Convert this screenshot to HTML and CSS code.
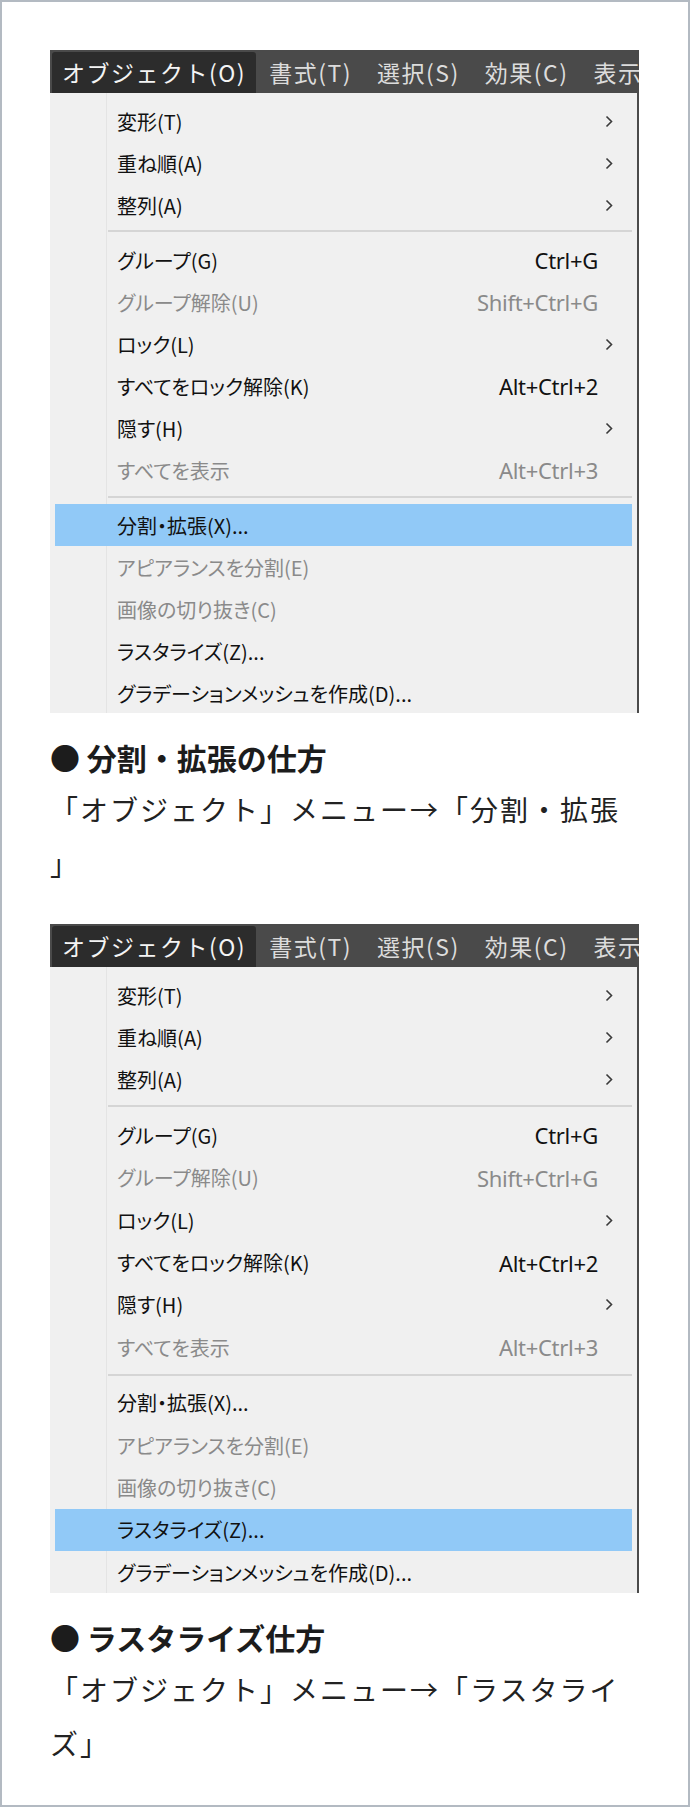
FILE: index.html
```html
<!DOCTYPE html>
<html lang="ja">
  <head>
    <meta charset="UTF-8">
    <title>分割・拡張とラスタライズ</title>
    <link rel="stylesheet" href="styles.css">
  </head>
  <body>
    <div class="page">

      <div class="shot">
        <div class="menubar">
          <span class="mb-item mb-open">オブジェクト(O)</span>
          <span class="mb-item">書式(T)</span>
          <span class="mb-item">選択(S)</span>
          <span class="mb-item">効果(C)</span>
          <span class="mb-item">表示(V)</span>
        </div>
        <div class="menu">
          <div class="row"><span class="label">変形(T)</span><span class="key"></span><span class="sub"><svg width="8" height="13" viewBox="0 0 8 13"><polyline points="1.5,1.5 6.5,6.5 1.5,11.5"/></svg></span></div>
          <div class="row"><span class="label">重ね順(A)</span><span class="key"></span><span class="sub"><svg width="8" height="13" viewBox="0 0 8 13"><polyline points="1.5,1.5 6.5,6.5 1.5,11.5"/></svg></span></div>
          <div class="row"><span class="label">整列(A)</span><span class="key"></span><span class="sub"><svg width="8" height="13" viewBox="0 0 8 13"><polyline points="1.5,1.5 6.5,6.5 1.5,11.5"/></svg></span></div>
          <div class="sep"></div>
          <div class="row"><span class="label">グループ(G)</span><span class="key">Ctrl+G</span><span class="sub"></span></div>
          <div class="row off"><span class="label">グループ解除(U)</span><span class="key">Shift+Ctrl+G</span><span class="sub"></span></div>
          <div class="row"><span class="label">ロック(L)</span><span class="key"></span><span class="sub"><svg width="8" height="13" viewBox="0 0 8 13"><polyline points="1.5,1.5 6.5,6.5 1.5,11.5"/></svg></span></div>
          <div class="row"><span class="label">すべてをロック解除(K)</span><span class="key">Alt+Ctrl+2</span><span class="sub"></span></div>
          <div class="row"><span class="label">隠す(H)</span><span class="key"></span><span class="sub"><svg width="8" height="13" viewBox="0 0 8 13"><polyline points="1.5,1.5 6.5,6.5 1.5,11.5"/></svg></span></div>
          <div class="row off"><span class="label">すべてを表示</span><span class="key">Alt+Ctrl+3</span><span class="sub"></span></div>
          <div class="sep sep-low"></div>
          <div class="row active"><span class="label">分割・拡張(X)...</span><span class="key"></span><span class="sub"></span></div>
          <div class="row off"><span class="label">アピアランスを分割(E)</span><span class="key"></span><span class="sub"></span></div>
          <div class="row off"><span class="label">画像の切り抜き(C)</span><span class="key"></span><span class="sub"></span></div>
          <div class="row"><span class="label">ラスタライズ(Z)...</span><span class="key"></span><span class="sub"></span></div>
          <div class="row"><span class="label">グラデーションメッシュを作成(D)...</span><span class="key"></span><span class="sub"></span></div>
        </div>
      </div>

      <h3 class="cap-title">● 分割・拡張の仕方</h3>
      <p class="cap-text">「オブジェクト」メニュー→「分割・拡張」</p>

      <div class="shot shot-second">
        <div class="menubar">
          <span class="mb-item mb-open">オブジェクト(O)</span>
          <span class="mb-item">書式(T)</span>
          <span class="mb-item">選択(S)</span>
          <span class="mb-item">効果(C)</span>
          <span class="mb-item">表示(V)</span>
        </div>
        <div class="menu">
          <div class="row"><span class="label">変形(T)</span><span class="key"></span><span class="sub"><svg width="8" height="13" viewBox="0 0 8 13"><polyline points="1.5,1.5 6.5,6.5 1.5,11.5"/></svg></span></div>
          <div class="row"><span class="label">重ね順(A)</span><span class="key"></span><span class="sub"><svg width="8" height="13" viewBox="0 0 8 13"><polyline points="1.5,1.5 6.5,6.5 1.5,11.5"/></svg></span></div>
          <div class="row"><span class="label">整列(A)</span><span class="key"></span><span class="sub"><svg width="8" height="13" viewBox="0 0 8 13"><polyline points="1.5,1.5 6.5,6.5 1.5,11.5"/></svg></span></div>
          <div class="sep"></div>
          <div class="row"><span class="label">グループ(G)</span><span class="key">Ctrl+G</span><span class="sub"></span></div>
          <div class="row off"><span class="label">グループ解除(U)</span><span class="key">Shift+Ctrl+G</span><span class="sub"></span></div>
          <div class="row"><span class="label">ロック(L)</span><span class="key"></span><span class="sub"><svg width="8" height="13" viewBox="0 0 8 13"><polyline points="1.5,1.5 6.5,6.5 1.5,11.5"/></svg></span></div>
          <div class="row"><span class="label">すべてをロック解除(K)</span><span class="key">Alt+Ctrl+2</span><span class="sub"></span></div>
          <div class="row"><span class="label">隠す(H)</span><span class="key"></span><span class="sub"><svg width="8" height="13" viewBox="0 0 8 13"><polyline points="1.5,1.5 6.5,6.5 1.5,11.5"/></svg></span></div>
          <div class="row off"><span class="label">すべてを表示</span><span class="key">Alt+Ctrl+3</span><span class="sub"></span></div>
          <div class="sep sep-low"></div>
          <div class="row"><span class="label">分割・拡張(X)...</span><span class="key"></span><span class="sub"></span></div>
          <div class="row off"><span class="label">アピアランスを分割(E)</span><span class="key"></span><span class="sub"></span></div>
          <div class="row off"><span class="label">画像の切り抜き(C)</span><span class="key"></span><span class="sub"></span></div>
          <div class="row active"><span class="label">ラスタライズ(Z)...</span><span class="key"></span><span class="sub"></span></div>
          <div class="row"><span class="label">グラデーションメッシュを作成(D)...</span><span class="key"></span><span class="sub"></span></div>
        </div>
      </div>

      <h3 class="cap-title">● ラスタライズ仕方</h3>
      <p class="cap-text">「オブジェクト」メニュー→「ラスタライズ」</p>

    </div>
  </body>
</html>
```

FILE: styles.css
```css
body {
  margin: 0;
  background-color: #fff;
  font-family: "Noto Sans CJK JP", "Noto Sans", sans-serif;
  color: #222;
}

.page {
  width: 690px;
  height: 1807px;
  box-sizing: border-box;
  border: 2px solid #b3bac2;
  padding: 48px 48px 0 48px;
}

/* screenshot of the menu */
.shot {
  width: 589px;
  --row: 42px;
}

.shot-second {
  --row: 42.4px;
  margin-top: 34px;
}

.menubar {
  display: flex;
  height: 43px;
  box-sizing: border-box;
  padding: 2px 0 0 2px;
  background-color: #4a4a4a;
  overflow: hidden;
  white-space: nowrap;
}

.mb-item {
  padding: 0 12px 0 13px;
  font-size: 23px;
  letter-spacing: 1.5px;
  line-height: 41px;
  color: #dcdcdc;
}

.mb-open {
  padding: 0 10px 0 10px;
  background-color: #2c2c2c;
  border-radius: 3px 3px 0 0;
  color: #f4f4f4;
}

.menu {
  height: 620px;
  box-sizing: border-box;
  padding: 7px 5px 0 5px;
  background: linear-gradient(to right, #f0f0f0 56px, #e4e4e4 56px, #e4e4e4 57px, #f0f0f0 57px);
  border-right: 2px solid #4b4b4b;
  overflow: hidden;
}

.shot-second .menu {
  height: 626px;
}

.row {
  display: grid;
  grid-template-columns: 1fr auto 34px;
  align-items: center;
  height: var(--row);
  padding-left: 62px;
  font-size: 20px;
  color: #111;
  font-feature-settings: "palt";
}

.row.off {
  color: #8a8a8a;
}

.row.active {
  background-color: #91c9f7;
}

.key {
  font-family: "Noto Sans", sans-serif;
  font-size: 22px;
  letter-spacing: -0.3px;
}

.sub {
  display: flex;
  padding-left: 7px;
}

.sub svg polyline {
  fill: none;
  stroke: #3a3a3a;
  stroke-width: 1.6;
}

.sep {
  height: 13px;
  box-sizing: border-box;
  padding-top: 4px;
  margin-left: 53px;
}

.sep::after {
  content: "";
  display: block;
  height: 2px;
  background-color: #d5d5d5;
}

.sep-low {
  padding-top: 5px;
}

/* captions */
.cap-title {
  margin: 20px 0 0 0;
  font-size: 30px;
  font-weight: 700;
  line-height: 49px;
  color: #1c1c1c;
}

.cap-text {
  margin: 0;
  font-size: 28px;
  letter-spacing: 2px;
  line-height: 54px;
  line-break: anywhere;
  text-spacing-trim: space-all;
  color: #222;
}
```
